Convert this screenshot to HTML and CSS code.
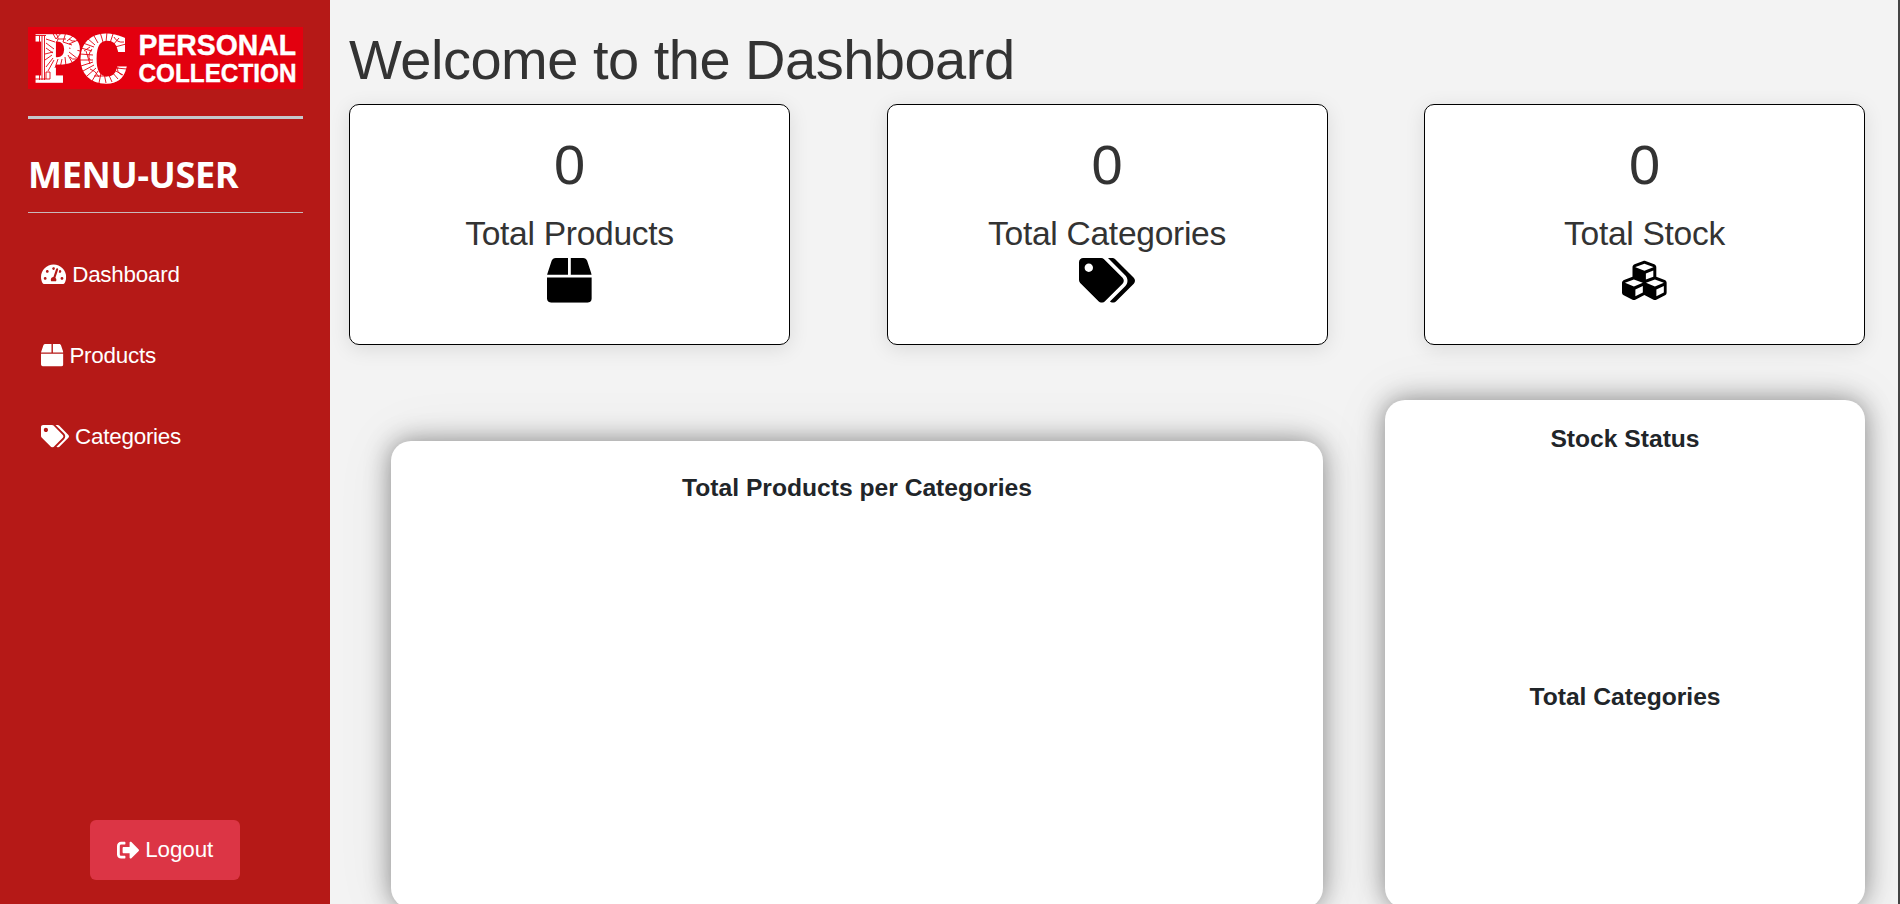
FILE: index.html
```html
<!DOCTYPE html>
<html lang="en">
<head>
<meta charset="utf-8">
<title>Dashboard</title>
<link rel="stylesheet" href="styles.css">
</head>
<body>
<svg class="sprite" aria-hidden="true">
  <symbol id="gauge" viewBox="0 0 576 512"><path d="M288 32C128.94 32 0 160.94 0 320c0 52.8 14.25 102.26 39.06 144.8 5.61 9.62 16.3 15.2 27.44 15.2h443c11.14 0 21.83-5.58 27.44-15.2C561.75 422.26 576 372.8 576 320c0-159.06-128.94-288-288-288zm0 64c14.71 0 26.58 10.13 30.32 23.65-1.11 2.26-2.64 4.23-3.45 6.67l-9.22 27.67c-5.13 3.49-10.97 6.01-17.64 6.01-17.67 0-32-14.33-32-32S270.33 96 288 96zM96 384c-17.67 0-32-14.33-32-32s14.33-32 32-32 32 14.33 32 32-14.33 32-32 32zm48-160c-17.67 0-32-14.33-32-32s14.33-32 32-32 32 14.33 32 32-14.33 32-32 32zm246.77-72.41l-61.33 184C343.13 347.33 352 364.54 352 384c0 11.72-3.38 22.55-8.88 32H232.88c-5.5-9.45-8.88-20.28-8.88-32 0-33.94 26.5-61.43 59.9-63.59l61.34-184.01c4.17-12.56 17.73-19.45 30.36-15.17 12.57 4.19 19.35 17.79 15.17 30.36zm14.66 57.2l15.52-46.55c3.47-1.29 7.13-2.23 11.05-2.23 17.67 0 32 14.33 32 32s-14.33 32-32 32c-11.38-.01-20.89-6.28-26.57-15.22zM480 384c-17.67 0-32-14.33-32-32s14.33-32 32-32 32 14.33 32 32-14.33 32-32 32z"/></symbol>
  <symbol id="box" viewBox="0 0 512 512"><path d="M509.5 184.6L458.9 32.8C452.4 13.2 434.1 0 413.4 0H272v192h238.7c-.4-2.5-.4-5-1.2-7.4zM240 0H98.6c-20.7 0-39 13.2-45.5 32.8L2.5 184.6c-.8 2.4-.8 4.9-1.2 7.4H240V0zM0 224v240c0 26.5 21.5 48 48 48h416c26.5 0 48-21.5 48-48V224H0z"/></symbol>
  <symbol id="tags" viewBox="0 0 640 512"><path d="M497.941 225.941L286.059 14.059A48 48 0 0 0 252.118 0H48C21.49 0 0 21.49 0 48v204.118a48 48 0 0 0 14.059 33.941l211.882 211.882c18.744 18.745 49.136 18.746 67.882 0l204.118-204.118c18.745-18.745 18.745-49.137 0-67.882zM112 160c-26.51 0-48-21.49-48-48s21.49-48 48-48 48 21.49 48 48-21.49 48-48 48zm513.941 133.823L421.823 497.941c-18.745 18.745-49.137 18.745-67.882 0l-.36-.36L527.64 323.522c16.999-16.999 26.362-39.6 26.362-63.64s-9.363-46.641-26.362-63.64L331.397 0h48.721a48 48 0 0 1 33.941 14.059l211.882 211.882c18.745 18.745 18.745 49.137 0 67.882z"/></symbol>
  <symbol id="cubes" viewBox="0 0 512 512"><path d="M488.6 250.2L392 214V105.5c0-15-9.3-28.4-23.4-33.7l-100-37.5c-8.1-3.1-17.1-3.1-25.3 0l-100 37.5c-14.1 5.3-23.4 18.7-23.4 33.7V214l-96.6 36.2C9.3 255.5 0 268.9 0 283.9V394c0 13.6 7.7 26.1 19.9 32.2l100 50c10.1 5.1 22.1 5.1 32.2 0l103.9-52 103.9 52c10.1 5.1 22.1 5.1 32.2 0l100-50c12.2-6.1 19.9-18.6 19.9-32.2V283.9c0-15-9.3-28.4-23.4-33.7zM358 214.8l-85 31.9v-68.2l85-37v73.3zM154 104.1l102-38.2 102 38.2v.6l-102 41.4-102-41.4v-.6zm84 291.1l-85 42.5v-79.1l85-38.8v75.4zm0-112l-102 41.4-102-41.4v-.6l102-38.2 102 38.2v.6zm240 112l-85 42.5v-79.1l85-38.8v75.4zm0-112l-102 41.4-102-41.4v-.6l102-38.2 102 38.2v.6z"/></symbol>
  <symbol id="signout" viewBox="0 0 512 512"><path d="M497 273L329 441c-15 15-41 4.5-41-17v-96H152c-13.3 0-24-10.7-24-24v-96c0-13.3 10.7-24 24-24h136V88c0-21.4 25.9-32 41-17l168 168c9.3 9.4 9.3 24.6 0 34zM192 436v-40c0-6.6-5.4-12-12-12H96c-17.7 0-32-14.3-32-32V160c0-17.7 14.3-32 32-32h84c6.6 0 12-5.4 12-12V76c0-6.6-5.4-12-12-12H96c-53 0-96 43-96 96v192c0 53 43 96 96 96h84c6.6 0 12-5.4 12-12z"/></symbol>
</svg>
<div class="layout">
  <aside class="sidebar">
    <svg class="logo" viewBox="0 0 275 62" role="img" aria-label="Personal Collection">
      <rect width="275" height="62" fill="#e3000f"/>
      <text class="logo-mono" x="6.500" y="53.500" textLength="93" lengthAdjust="spacingAndGlyphs">PC</text>
      <!-- engraved ornament over the monogram -->
      <g class="engraving">
        <path d="M11.500 9v44M14 9v44M16.500 9v44M6 8.500h12M6 52h12M18 45h4v7h-4zM18 12l9 3M24 5l4 7 6-7M30 12h8M38 5l-3 10 9 3M45 9l-6 5M50 13l-9 4M52 24l-11-3M50 32l-9-7M45 37l-5-9M38 39l-1-9M32 41l2-9M27 41l3-9M18 16l8 6M18 21l7 5M17 27l8-2M17 33l7-5M18 40l7-9M20 44l6-11"/>
        <path d="M53 21l11 3M52 27l13 1M52 33h13M53 39l12-4M55 44l11-6M59 49l9-8M64 54l6-10M71 56l2-10M78 56l-2-10M84 55l-4-9M90 52l-6-7M95 48l-9-5M99 42l-11-1M55 16l11 4M59 11l8 7M65 7l5 9M72 5l3 10M79 5l-1 10M85 7l-3 9M91 11l-6 7M98 17l-11 3M64 22q-5 6-2 11M66 49h13M86 10q3 6 10 5M58 24l4 13M56 24l6-4"/>
        <path d="M28 7q4 4 0 9M41 12q3 3 6 2M42 30q2 3 6 2M62 42q5 1 9 8M90 40q-2 5 4 8"/>
      </g>
      <path d="M46 26c-5-3-4-7-1.500-6q1.500.5 1.500 2 1-2.500 3-1.500c2.500 1.500 0 4-3 5.500z" fill="#fff"/>
      <text class="logo-name" x="110.500" y="28" font-size="29.500" textLength="157.500" lengthAdjust="spacingAndGlyphs">PERSONAL</text>
      <text class="logo-name" x="110.500" y="54.500" font-size="26" textLength="158" lengthAdjust="spacingAndGlyphs">COLLECTION</text>
    </svg>
    <hr class="rule-thick">
    <h2 class="menu-title">MENU-USER</h2>
    <nav class="nav">
      <a class="nav-link"><svg class="icon wide"><use href="#gauge"/></svg>Dashboard</a>
      <a class="nav-link"><svg class="icon"><use href="#box"/></svg>Products</a>
      <a class="nav-link"><svg class="icon wider"><use href="#tags"/></svg>Categories</a>
    </nav>
    <button class="logout"><svg class="icon"><use href="#signout"/></svg>Logout</button>
  </aside>
  <main class="main">
    <h1 class="title">Welcome to the Dashboard</h1>
    <section class="stats">
      <div class="stat"><div class="value">0</div><div class="label">Total Products</div><svg class="stat-icon"><use href="#box"/></svg></div>
      <div class="stat"><div class="value">0</div><div class="label">Total Categories</div><svg class="stat-icon tags"><use href="#tags"/></svg></div>
      <div class="stat"><div class="value">0</div><div class="label">Total Stock</div><svg class="stat-icon"><use href="#cubes"/></svg></div>
    </section>
    <section class="charts">
      <div class="panel products"><h3 class="panel-title">Total Products per Categories</h3></div>
      <div class="panel status">
        <h3 class="panel-title stock">Stock Status</h3>
        <h3 class="panel-title">Total Categories</h3>
      </div>
    </section>
  </main>
</div>
</body>
</html>
```
FILE: styles.css
```css
* { box-sizing: border-box; }
body {
  margin: 0;
  height: 904px;
  overflow: hidden;
  background: #f3f3f3;
  font-family: "Liberation Sans", Arial, sans-serif;
  color: #333;
}
.sprite { display: none; }
.layout { display: flex; height: 904px; }
.sidebar {
  display: flex;
  flex-direction: column;
  flex: 0 0 330px;
  padding: 27px 27px 24px 28px;
  background: #b51917;
  color: #fff;
}
.logo { display: block; width: 275px; height: 62px; flex: none; overflow: visible; }
.logo-mono { font: bold 62px "DejaVu Serif", serif; fill: #fff; stroke: #fff; stroke-width: 3.5px; }
.logo-name { font-family: "Liberation Sans", Arial, sans-serif; font-weight: bold; fill: #fff; stroke: #fff; stroke-width: 0.4px; }
.engraving { fill: none; stroke: #e3000f; stroke-width: 0.9; }
.rule-thick { width: 100%; height: 3px; margin: 27px 0 0; border: 0; background: #c5c7cb; }
.menu-title {
  height: 94px;
  margin: 0;
  border-bottom: 1px solid #c9b9bb;
  padding-top: 31px;
  font: bold 36px/50px "Noto Sans", sans-serif;
  letter-spacing: -0.3px;
}
.nav { display: flex; flex-direction: column; padding: 21px 0 0 13px; }
.nav-link { display: flex; align-items: center; gap: 6px; height: 81px; font-size: 22.4px; letter-spacing: -0.22px; }
.icon { flex: none; width: 22.4px; height: 22.4px; fill: currentColor; overflow: visible; }
.icon.wide { width: 25.2px; }
.icon.wider { width: 28px; }
.logout {
  display: flex;
  align-items: center;
  justify-content: center;
  gap: 6px;
  width: 150px;
  height: 60px;
  margin: auto 0 0 62px;
  padding: 0;
  border: 0;
  border-radius: 6px;
  background: #dc3545;
  color: #fff;
  font: 22.4px "Liberation Sans", Arial, sans-serif;
  letter-spacing: -0.1px;
}
.main { flex: 1; padding: 26px 33px 0 19px; border-right: 2px solid #444; }
.title { margin: 0; height: 78px; font-size: 56px; font-weight: 400; line-height: 67px; letter-spacing: -0.5px; }
.stats { display: flex; justify-content: space-between; }
.stat {
  display: flex;
  flex-direction: column;
  align-items: center;
  width: 441px;
  height: 241px;
  padding-top: 26px;
  border: 1px solid #000;
  border-radius: 10px;
  background: #fff;
  box-shadow: 0 4px 20px rgba(0, 0, 0, 0.1);
}
.value { height: 83px; font-size: 56px; line-height: 67px; }
.label { font-size: 33.6px; line-height: 40px; height: 44px; letter-spacing: -0.3px; }
.stat-icon { width: 44.8px; height: 44.8px; fill: #000; overflow: visible; }
.stat-icon.tags { width: 56px; }
.charts { display: flex; justify-content: space-between; padding: 55px 0 0 42px; }
.panel {
  border-radius: 20px;
  background: #fff;
  box-shadow: 0 0 26px rgba(0, 0, 0, 0.42), 0 0 60px rgba(0, 0, 0, 0.08);
  text-align: center;
}
.products { width: 932px; height: 467px; margin-top: 41px; padding-top: 32px; }
.status { width: 480px; height: 508px; padding-top: 24px; }
.panel-title { margin: 0; font-size: 24.64px; line-height: 29px; color: #212529; }
.stock { height: 258px; }
```
